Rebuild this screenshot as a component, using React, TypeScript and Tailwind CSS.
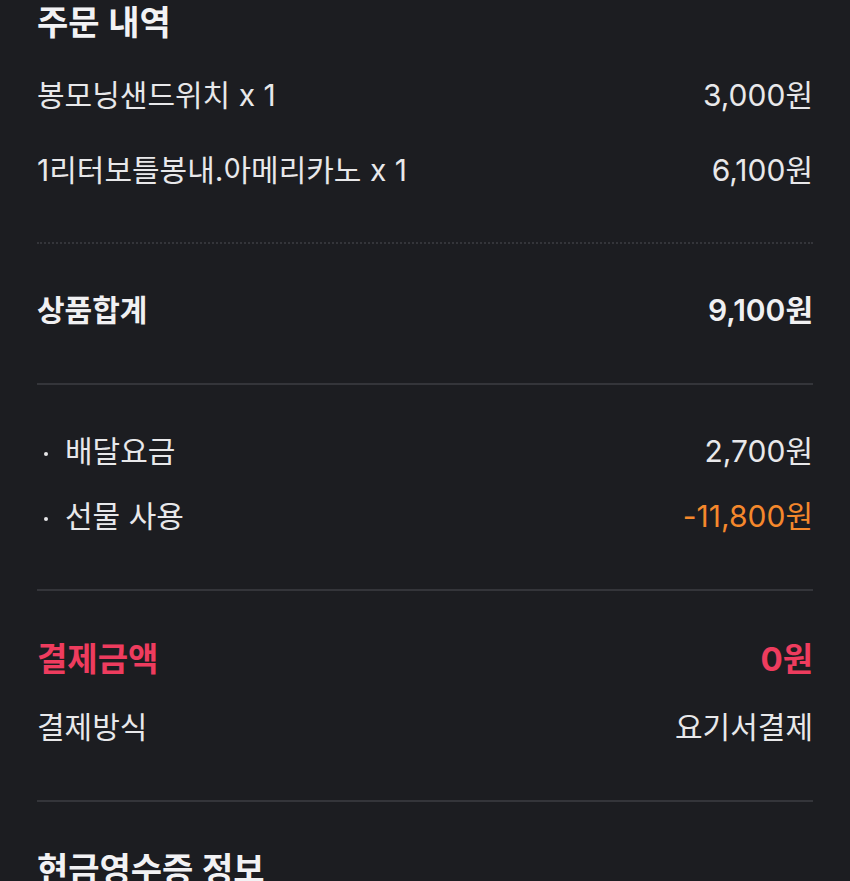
const FONT = "font-['Inter','Noto_Sans_CJK_KR',sans-serif]";

function Row({
  label,
  value,
  bullet = false,
  className = "",
  valueClassName = "",
}: {
  label: string;
  value: string;
  bullet?: boolean;
  className?: string;
  valueClassName?: string;
}) {
  return (
    <div className={`flex items-baseline justify-between h-[40px] leading-[40px] ${className}`}>
      <span>
        {bullet && (
          <span className="inline-block w-[28px]">
            <span className="inline-block ml-[7px] w-[4px] h-[4px] rounded-full bg-[#e6e6e8] align-middle" />
          </span>
        )}
        {label}
      </span>
      <span className={valueClassName}>{value}</span>
    </div>
  );
}

export default function App() {
  return (
    <div className={`min-h-[881px] w-full bg-[#1c1d21] text-[#e8e8ea] ${FONT} overflow-hidden`}>
      <div className="px-[37px] flex flex-col">
        <h2 className="h-[45px] leading-[45px] text-[34px] font-semibold text-[#f2f2f4] m-0">주문 내역</h2>

        <div className="text-[30px] flex flex-col">
          <Row className="mt-[30px]" label="봉모닝샌드위치 x 1" value="3,000원" />
          <Row className="mt-[35px]" label="1리터보틀봉내.아메리카노 x 1" value="6,100원" />
        </div>

        <div className="mt-[52px] border-t-2 border-dotted border-[#34353a]" />

        <div className="text-[30px] font-semibold text-[#f0f0f2]">
          <Row className="mt-[46px]" label="상품합계" value="9,100원" />
        </div>

        <div className="mt-[53px] h-[2px] bg-[#34353a]" />

        <div className="text-[30px] flex flex-col">
          <Row className="mt-[46px]" bullet label="배달요금" value="2,700원" />
          <Row
            className="mt-[25px]"
            bullet
            label="선물 사용"
            value="-11,800원"
            valueClassName="text-[#f5882c]"
          />
        </div>

        <div className="mt-[53px] h-[2px] bg-[#34353a]" />

        <div className="flex flex-col">
          <Row
            className="mt-[48px] text-[33px] font-bold text-[#ee3c5e]"
            label="결제금액"
            value="0원"
          />
          <Row className="mt-[28px] text-[30px]" label="결제방식" value="요기서결제" />
        </div>

        <div className="mt-[53px] h-[2px] bg-[#34353a]" />

        <h2 className="mt-[45px] h-[45px] leading-[45px] text-[34px] font-semibold text-[#f2f2f4] m-0">
          현금영수증 정보
        </h2>
      </div>
    </div>
  );
}
